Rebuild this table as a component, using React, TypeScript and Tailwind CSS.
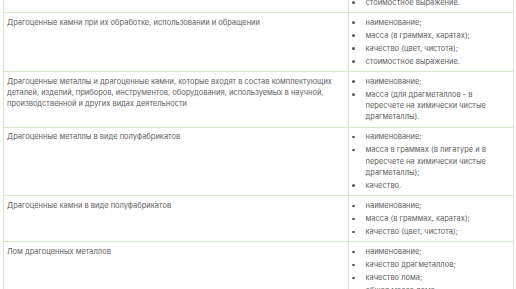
const rows: { title: string; items: string[] }[] = [
  { title: '', items: ['стоимостное выражение.'] },
  {
    title: 'Драгоценные камни при их обработке, использовании и обращении',
    items: ['наименование;', 'масса (в граммах, каратах);', 'качество (цвет, чистота);', 'стоимостное выражение.'],
  },
  {
    title:
      'Драгоценные металлы и драгоценные камни, которые входят в состав комплектующих деталей, изделий, приборов, инструментов, оборудования, используемых в научной, производственной и других видах деятельности',
    items: ['наименование;', 'масса (для драгметаллов - в пересчете на химически чистые драгметаллы).'],
  },
  {
    title: 'Драгоценные металлы в виде полуфабрикатов',
    items: [
      'наименование;',
      'масса в граммах (в лигатуре и в пересчете на химически чистые драгметаллы);',
      'качество.',
    ],
  },
  {
    title: 'Драгоценные камни в виде полуфабрикатов',
    items: ['наименование;', 'масса (в граммах, каратах);', 'качество (цвет, чистота);'],
  },
  {
    title: 'Лом драгоценных металлов',
    items: ['наименование;', 'качество драгметаллов;', 'качество лома;', 'общая масса лома;', 'масса драгметаллов.'],
  },
]

export default function App() {
  return (
    <div className="h-[289px] overflow-hidden bg-white font-['Inter',sans-serif] text-[7.5px] leading-[11.3px] text-[#626262]">
      <div className="ml-[3px] mt-[-7px] w-[511px]">
        {rows.map((row, i) => (
          <div key={i} className="grid grid-cols-[345px_1fr]">
            <div className="border-b border-l border-[#d5e8cb] pb-[4px] pl-[3px] pr-[4px] pt-[3.75px]">
              {row.title}
            </div>
            <div className="border-b border-l border-r border-[#d5e8cb] pb-[4px] pl-[3px] pr-[20px] pt-[3.75px]">
              <ul className="flex flex-col gap-[1.7px]">
                {row.items.map((item) => (
                  <li key={item} className="flex">
                    <span className="flex w-[13.5px] shrink-0 pt-[4.5px]">
                      <span className="h-[2.5px] w-[2.5px] rounded-full bg-[#555]" />
                    </span>
                    <span>{item}</span>
                  </li>
                ))}
              </ul>
            </div>
          </div>
        ))}
      </div>
    </div>
  )
}
